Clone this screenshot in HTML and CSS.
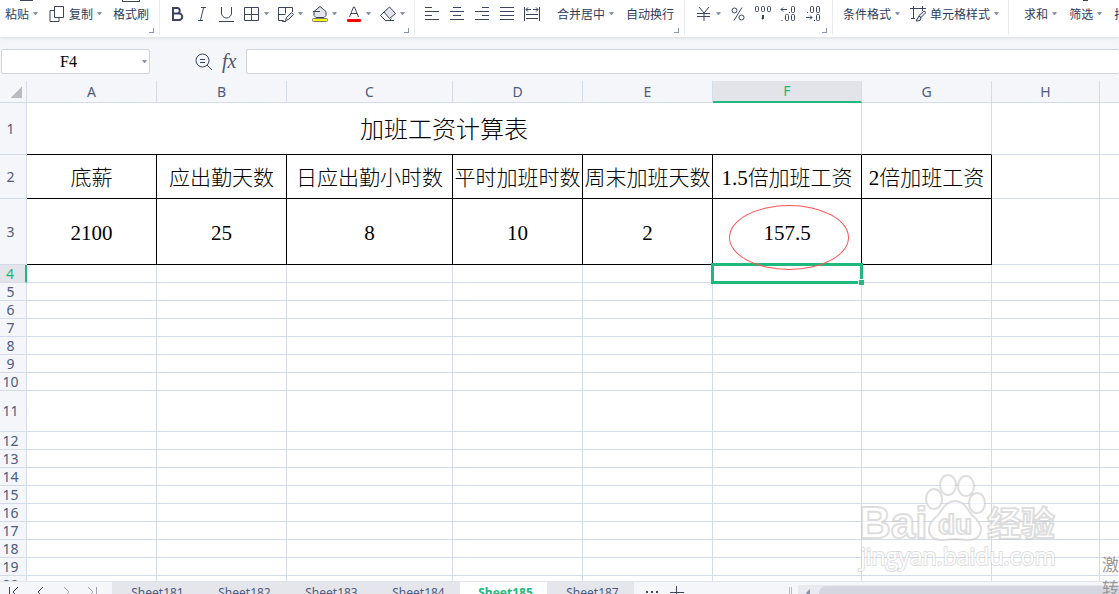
FILE: index.html
```
<!DOCTYPE html>
<html lang="zh-CN">
<head>
<meta charset="UTF-8">
<title>加班工资计算表</title>
<link rel="stylesheet" href="styles.css">
</head>
<body>

<header class="toolbar">
  <div class="group first">
    <span class="cut paste"></span>
    <button class="drop">粘贴</button>
    <button class="drop"><svg width="16" height="16"><path d="M5.5 .5h9v11h-9zM5.5 4.500h-4.500v11h9v-4"/></svg>复制</button>
    <button>格式刷</button>
    <span class="cut brush"></span>
    <i class="more"></i>
  </div>
  <div class="group icons">
    <button aria-label="加粗"><svg width="16" height="16"><path class="heavy" d="M4 2h5a3 3 0 0 1 0 5.500h-5zM4 7.500h6a3 3 0 0 1 0 6.500h-6z"/></svg></button>
    <button aria-label="倾斜"><svg width="16" height="16"><path d="M7 1.500h5M4 14.500h5M9.500 2l-3 12"/></svg></button>
    <button aria-label="下划线"><svg width="16" height="16"><path d="M2.500 1v6a4.500 4.500 0 0 0 10 0v-6M0 15.500h15"/></svg></button>
    <button class="drop" aria-label="边框"><svg width="16" height="16"><path d="M.5 1.500h14v13h-14zM7.500 1.500v13M.5 8.500h14"/></svg></button>
    <button class="drop" aria-label="绘图边框"><svg width="16" height="16"><path d="M14.500 6v-4.500h-14v13h5M7.500 1.500v6M.5 8.500h7M4 15.500h4"/><path class="tint" d="M7.500 14.500l1-3 5-5 2 2-5 5z"/></svg></button>
    <button class="drop" aria-label="填充颜色"><svg width="16" height="16"><path class="tint" d="M2 5.500l6-5 6 5v4l-2 2h-8l-2-2z"/><path d="M1 5.500h7"/><rect class="yellow" x=".5" y="12.500" width="15" height="3" rx="1"/></svg></button>
    <button class="drop" aria-label="字体颜色"><svg width="16" height="16"><path d="M3.500 11l4-10h1l4 10M5 7.500h6"/><rect class="red" x="1" y="13" width="14" height="3" rx="1"/></svg></button>
    <button class="drop" aria-label="清除"><svg width="16" height="16"><path class="tint" d="M4 6l5.500-5 6 6.500-6 5z"/><path d="M4 6l-3.500 3.500 5 5h4l2-2M5 14.500h9"/></svg></button>
    <i class="more"></i>
  </div>
  <div class="group icons aligns">
    <button aria-label="左对齐"><svg width="16" height="16"><path d="M1 1.500h7M1 5.500h14M1 9.500h7M1 13.500h14"/></svg></button>
    <button aria-label="居中"><svg width="16" height="16"><path d="M4 1.500h8M1 5.500h14M4 9.500h8M1 13.500h14"/></svg></button>
    <button aria-label="右对齐"><svg width="16" height="16"><path d="M8 1.500h7M1 5.500h14M8 9.500h7M1 13.500h14"/></svg></button>
    <button aria-label="两端对齐"><svg width="16" height="16"><path d="M1 1.500h14M1 5.500h14M1 9.500h14M1 13.500h14"/></svg></button>
    <button aria-label="分散对齐"><svg width="16" height="16"><path d="M.5 1v14M15.500 1v14M2 3.500h5M9 3.500h5M4 1.500l-2 2 2 2M12 1.500l2 2-2 2M2 8.500h12M2 12.500h12"/></svg></button>
    <div class="words">
      <button class="drop">合并居中</button>
      <button>自动换行</button>
    </div>
    <i class="more"></i>
  </div>
  <div class="group icons number">
    <button class="drop" aria-label="货币"><svg width="16" height="16"><path d="M3 1l5 6 5-6M8 7v8M1 7.500h13M1 10.500h13"/></svg></button>
    <button aria-label="百分比"><svg width="16" height="16"><circle cx="4.500" cy="4.500" r="2.500"/><circle cx="11.500" cy="11.500" r="2.500"/><path d="M12 1.500l-8 13"/></svg></button>
    <button aria-label="千位分隔"><svg width="16" height="16"><rect x=".5" y=".5" width="3" height="5" rx="1"/><rect x="6.500" y=".5" width="3" height="5" rx="1"/><rect x="12.500" y=".5" width="3" height="5" rx="1"/><path class="heavy" d="M8 9v3l-1 1"/></svg></button>
    <button aria-label="增加小数"><svg width="16" height="16"><path d="M1 3.500h6M3 1.500l-2 2 2 2M9 6.500h1M1.500 14.500h1"/><rect x="11.500" y=".5" width="3" height="6" rx="1"/><rect x="5.500" y="8.500" width="3" height="6" rx="1"/><rect x="11.500" y="8.500" width="3" height="6" rx="1"/></svg></button>
    <button aria-label="减少小数"><svg width="16" height="16"><path d="M1 11.500h6M5 9.500l2 2-2 2M2 6.500h1M9 14.500h1"/><rect x="5.500" y=".5" width="3" height="6" rx="1"/><rect x="11.500" y=".5" width="3" height="6" rx="1"/><rect x="11.500" y="8.500" width="3" height="6" rx="1"/></svg></button>
    <i class="more"></i>
  </div>
  <div class="group">
    <button class="drop">条件格式</button>
    <button class="drop"><svg width="16" height="16"><path d="M0 2.500h16M3.500 0v13M12.500 0v5M1 12.500h4"/><path class="tint" d="M14 5l2 1.500-5 5-2-2zM9 10l2 2-1 2.500-4 .5z"/></svg>单元格样式</button>
  </div>
  <div class="group last">
    <button class="drop">求和</button>
    <span class="cut filter"></span>
    <button class="drop">筛选</button>
    <button>排序</button>
  </div>
</header>

<div class="formula">
  <div class="namebox"><input type="text" value="F4" aria-label="名称框"></div>
  <div class="tools">
    <button aria-label="查找"><svg width="18" height="18"><circle cx="7.500" cy="7.500" r="6.500"/><path d="M5 6.500h5M5 9.500h5M12 12l5 5"/></svg></button>
    <button class="fx" aria-label="插入函数">fx</button>
  </div>
  <input class="value" type="text" aria-label="编辑栏">
</div>

<main class="sheet">
  <table id="grid">
    <colgroup>
      <col class="w-num"><col class="w-m"><col class="w-m"><col class="w-c"><col class="w-m"><col class="w-m"><col class="w-f"><col class="w-m"><col class="w-h"><col>
    </colgroup>
    <thead>
      <tr><th class="corner"></th><th>A</th><th>B</th><th>C</th><th>D</th><th>E</th><th class="on">F</th><th>G</th><th>H</th><th></th></tr>
    </thead>
    <tbody>
      <tr class="r1"><th>1</th><td colspan="6" class="title">加班工资计算表</td><td class="under"></td><td></td><td></td></tr>
      <tr class="r2 box"><th>2</th><td>底薪</td><td>应出勤天数</td><td>日应出勤小时数</td><td>平时加班时数</td><td>周末加班天数</td><td>1.5倍加班工资</td><td>2倍加班工资</td><td></td><td></td></tr>
      <tr class="r3 box"><th>3</th><td>2100</td><td>25</td><td>8</td><td>10</td><td>2</td><td class="marked">157.5</td><td></td><td></td><td></td></tr>
      <tr><th class="on">4</th><td></td><td></td><td></td><td></td><td></td><td class="selected"></td><td></td><td></td><td></td></tr>
    </tbody>
  </table>

  <svg class="brand" width="204" height="106" viewBox="0 0 204 106" aria-hidden="true">
    <text class="logo" x="3" y="64">Bai</text>
    <ellipse cx="78" cy="25" rx="8" ry="10"/>
    <ellipse cx="92" cy="11" rx="8" ry="10"/>
    <ellipse cx="110" cy="12" rx="8" ry="10"/>
    <ellipse cx="121" cy="29" rx="8" ry="10"/>
    <path d="M99 27c10 0 12 9 18 15 7 6 10 12 7 18-4 8-14 6-25 5-11 1-21 3-25-5-3-6 0-12 7-18 6-6 8-15 18-15z"/>
    <text class="du" x="82" y="60">du</text>
    <text class="cn" x="131" y="62">经验</text>
    <text class="url" x="4" y="91">jingyan.baidu.com</text>
  </svg>
</main>

<footer class="tabs">
  <nav>
    <button aria-label="第一张"><svg width="12" height="12"><path d="M1.500 1v11M10 1l-5 5 5 5"/></svg></button>
    <button aria-label="上一张"><svg width="12" height="12"><path d="M9 1l-5 5 5 5"/></svg></button>
    <button class="dim" aria-label="下一张"><svg width="12" height="12"><path d="M4 1l5 5-5 5"/></svg></button>
    <button class="dim" aria-label="最后一张"><svg width="12" height="12"><path d="M10.500 1v11M2 1l5 5-5 5"/></svg></button>
  </nav>
  <button class="tab">Sheet181</button>
  <button class="tab">Sheet182</button>
  <button class="tab">Sheet183</button>
  <button class="tab">Sheet184</button>
  <button class="tab active">Sheet185</button>
  <button class="tab">Sheet187</button>
  <div class="extra">
    <button aria-label="更多"><svg width="14" height="14"><path class="heavy" d="M1 6h2M6 6h2M11 6h2"/></svg></button>
    <button aria-label="新建"><svg width="14" height="14"><path d="M0 6.500h14M6.500 0v14"/></svg></button>
  </div>
  <span class="split"></span>
  <div class="scroll"><span class="left"></span><span class="thumb"></span></div>
</footer>

<div class="activate"><p>激活</p><p>转到</p></div>

<script>
const body=document.querySelector('#grid tbody');
for(let n=5;n<=20;n++){
  const tr=document.createElement('tr');
  if(n===11) tr.className='r11';
  tr.innerHTML=`<th>${n}</th>`+'<td></td>'.repeat(9);
  body.appendChild(tr);
}
</script>
</body>
</html>
```

FILE: styles.css
```
*,*::before,*::after{box-sizing:border-box}
body{margin:0;height:100vh;display:flex;flex-direction:column;overflow:hidden;position:relative;background:#f5f6f9;color:#2f3b59;font-family:"Noto Sans","Noto Sans CJK SC",sans-serif;font-size:12px}
button{border:0;padding:0;background:none;color:inherit;font:inherit;white-space:nowrap;display:flex;align-items:center;gap:4px;flex:none}
input{border:1px solid #d3d5dd;border-radius:2px;background:#fff;height:25px;outline:none}
svg{display:block;fill:none;stroke:#3a4562;flex:none}
.heavy{stroke-width:2}
.tint{fill:#e3e5ea}
.yellow{fill:#ff0;stroke:#777}
.red{fill:#f00;stroke:none}

.toolbar{display:flex;flex:none;height:37px;background:#fff;overflow:hidden;box-shadow:0 1px 3px #d8dade;position:relative}
.group{display:flex;flex:none;align-items:center;gap:10px;height:35px;padding:0 9px 8px 10px;border-right:1px solid #ecedf1;position:relative}
.first{padding:0 10px 8px 5px;gap:11px}
.icons{gap:9px;padding:0 9px 8px 9px}
.aligns{padding-right:10px}
.number{padding:0 11px 8px 11px}
.last{gap:12px;padding-left:15px;border:0}
.words{display:flex;gap:12px;margin-left:8px}
.drop::after{content:"";width:5px;border:solid transparent;border-width:3px 2px 0;border-top-color:#8a94b0}
.more{position:absolute;right:5px;bottom:2px;width:5px;height:5px;border:solid #8a94b0;border-width:0 1px 1px 0}
.cut{position:absolute;top:0;background:#3a4562}
.paste{left:20px;width:13px;height:1px}
.brush{left:122px;width:18px;height:2px;background:none;border:1px solid #3a4562;border-top:0}
.filter{left:74px;width:5px;height:1px}

.formula{display:flex;flex:none;height:44px;padding:12px 0 0 1px}
.namebox{position:relative;width:149px}
.namebox input{width:100%;padding:0 14px 0 0;text-align:center;font:16px "Liberation Serif",serif;color:#000}
.namebox::after{content:"";position:absolute;right:3px;top:11px;width:5px;border:solid transparent;border-width:3px 2px 0;border-top-color:#8a94b0}
.tools{display:flex;align-items:center;gap:9px;width:96px;height:25px;padding-left:45px}
.fx{font:italic 20px "Liberation Serif",serif;color:#4c5670}
.value{flex:1;border-right:0}

.sheet{flex:1;min-height:0;overflow:hidden;position:relative;background:#fff}
table{width:100%;table-layout:fixed;border-spacing:0}
.w-num{width:27px}
.w-m{width:130px}
.w-c{width:166px}
.w-f{width:149px}
.w-h{width:108px}
th,td{height:18px;padding:0;border:solid #d4dbe9;border-width:0 1px 1px 0;text-align:center;white-space:nowrap}
th:last-child,td:last-child{border-right:0}
th{background:#f5f6f9;color:#4c5b80;font-weight:normal;font-size:14px;line-height:16px}
thead th{height:22px}
tbody th{padding-right:5px}
td{color:#000;font:21px/24px "Liberation Serif","Noto Sans CJK SC",serif;font-weight:300}
.corner{background:linear-gradient(135deg,transparent 50%,#b9bbc0 50%) 11px 6px/11px 11px no-repeat #f5f6f9}
th.on{background:#e3e4ea;color:#20b97d}
thead .on{border-bottom:2px solid #20b97d}
tbody .on{border-right:2px solid #20b97d}
.r1 td{height:52px;padding-top:2px}
.r2 td{height:44px;padding-top:2px}
.r3 td{height:66px;padding-top:2px}
.r11 td{height:41px}
td.title{font-size:24px;border-bottom-color:#000}
.under{border-bottom-color:#000}
.box td:nth-child(-n+8){border-color:#000}
.marked,.selected{position:relative}
.marked::after{content:"";position:absolute;z-index:2;left:16px;top:6px;width:120px;height:65px;border:1px solid #f55;border-radius:50%}
.selected::before{content:"";position:absolute;inset:-2px;border:3px solid #20b97d}
.selected::after{content:"";position:absolute;right:-3px;bottom:-3px;width:6px;height:6px;background:#20b97d;border:solid #fff;border-width:1px 0 0 1px}

.brand{position:absolute;right:59px;bottom:1px;fill:rgba(255,255,255,.7);stroke:rgba(190,190,190,.5);stroke-width:2}
.logo{font:bold 44px "Liberation Sans",sans-serif}
.du{font:bold 28px "Liberation Sans",sans-serif}
.cn{font:bold 34px "Noto Sans CJK SC",sans-serif}
.url{font:23px "Open Sans",sans-serif;fill:#fff;paint-order:stroke}

.tabs{display:flex;flex:none;height:13px;overflow:hidden;border-top:1px solid #e3e4ea;background:#f5f6f9}
.tabs button{align-items:flex-start}
nav{display:flex;gap:14px;width:112px;padding:4px 0 0 8px}
.dim{opacity:.45}
.tabs .tab{width:87px;height:24px;padding:2px 0 0 4px;justify-content:center;background:#e5e6eb;color:#4c5b80;font-size:12px;line-height:18px}
.tabs .active{background:#fff;color:#20b97d;font-weight:bold}
.extra{display:flex;gap:11px;padding:4px 0 0 11px}
.split{width:3px;margin:5px 6px 0 auto;border:solid #b4bac8;border-width:0 1px}
.scroll{display:flex;width:321px;height:16px;margin-top:3px;background:#e9eaf0}
.left{margin:4px 9px 0 8px;height:8px;border:4px solid transparent;border-right-color:#8a94b0;border-left:0}
.thumb{flex:1;margin-top:1px;border-radius:8px 0 0 8px;background:#d4d7e0}

.activate{position:absolute;left:calc(100% - 17px);top:553px;color:#999;font-size:17px;line-height:24px;white-space:nowrap}
.activate p{margin:0}
```
